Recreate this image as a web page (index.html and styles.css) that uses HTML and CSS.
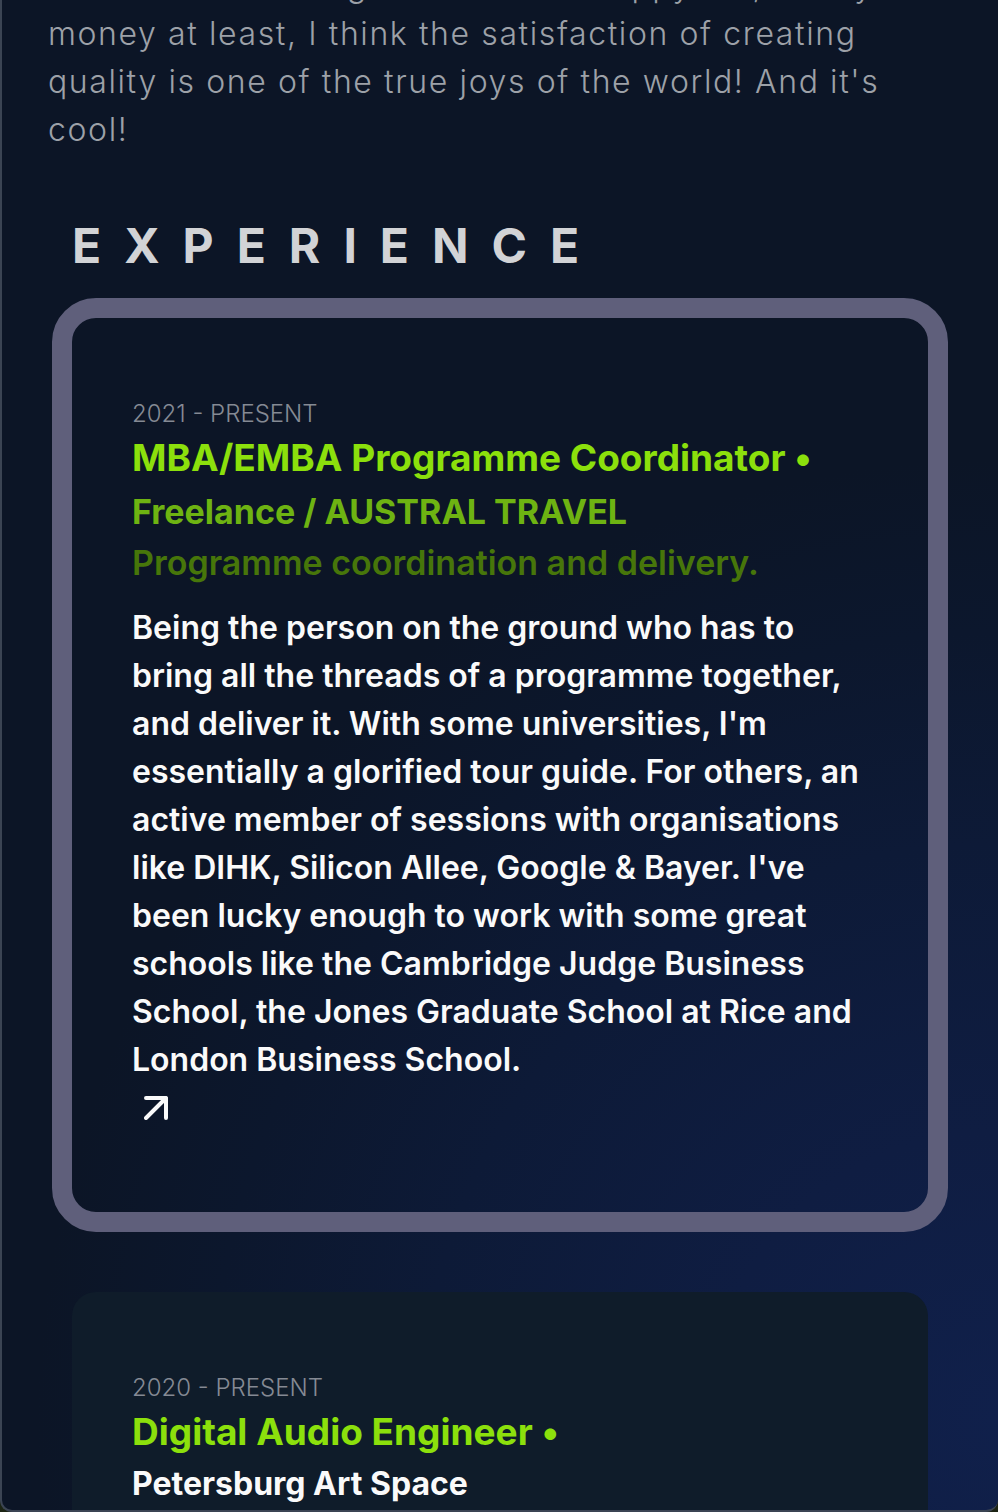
FILE: index.html
```html
<!DOCTYPE html>
<html lang="en">
<head>
<meta charset="utf-8">
<meta name="viewport" content="width=device-width, initial-scale=1">
<title>Experience</title>
<link rel="stylesheet" href="styles.css">
</head>
<body>
<div class="window">
  <main class="content">
    <p class="intro">Even where making it isn't that a happy life, surely money at least, I think the satisfaction of creating quality is one of the true joys of the world! And it's cool!</p>
    <section class="experience">
      <h2 class="section-title">EXPERIENCE</h2>
      <div class="cards">
        <article class="card card-active">
          <p class="period">2021 - PRESENT</p>
          <h3 class="role">MBA/EMBA Programme Coordinator •</h3>
          <p class="company">Freelance / AUSTRAL TRAVEL</p>
          <p class="tagline">Programme coordination and delivery.</p>
          <p class="summary">Being the person on the ground who has to bring all the threads of a programme together, and deliver it. With some universities, I'm essentially a glorified tour guide. For others, an active member of sessions with organisations like DIHK, Silicon Allee, Google &amp; Bayer. I've been lucky enough to work with some great schools like the Cambridge Judge Business School, the Jones Graduate School at Rice and London Business School.</p>
          <a class="more" href="#" aria-label="Open details">
            <svg width="24" height="24" viewBox="0 0 24 24" fill="none" stroke="currentColor" stroke-width="4" stroke-linecap="round" stroke-linejoin="round" aria-hidden="true"><path d="M2 2H22V22M22 2L2 22"/></svg>
          </a>
        </article>
        <article class="card card-filled">
          <p class="period">2020 - PRESENT</p>
          <h3 class="role">Digital Audio Engineer •</h3>
          <p class="place">Petersburg Art Space</p>
        </article>
      </div>
    </section>
  </main>
</div>
</body>
</html>
```
FILE: styles.css
```css
* {
  box-sizing: border-box;
}

body {
  margin: 0;
  background: #1c2414;
  font-family: Inter, "Liberation Sans", sans-serif;
}

h2, h3, p {
  margin: 0;
}

.window {
  height: 100vh;
  overflow: hidden;
  border: 2px solid #3b4453;
  border-width: 0 0 2px 2px;
  border-radius: 0 0 12px 12px;
  background: radial-gradient(circle 960px at 100% 94%, #10204b 0%, #0f1d42 30%, #0d1a37 60%, #0c172d 82%, #0c1526 100%);
}

.content {
  margin-top: -38px;
  padding: 0 70px 0 46px;
}

.intro {
  color: #9da1a8;
  font-size: 32px;
  font-weight: 300;
  line-height: 48px;
  letter-spacing: 0.05em;
}

.experience {
  margin: 56px 0 0 24px;
}

.section-title {
  color: #d2d3d6;
  font-size: 48px;
  font-weight: 700;
  line-height: 72px;
  letter-spacing: 23px;
}

.cards {
  display: flex;
  flex-direction: column;
  gap: 80px;
  margin-top: 36px;
}

.card {
  padding: 80px 60px;
  border-radius: 24px;
}

.card-active {
  outline: 20px solid #5f5f7b;
}

.card-filled {
  background: #0f1c2a;
}

.period {
  color: #858a94;
  font-size: 24px;
  font-weight: 300;
  line-height: 32px;
}

.role {
  color: #8ce00c;
  font-size: 37px;
  font-weight: 700;
  line-height: 56px;
}

.company {
  color: #6eb312;
  font-size: 34px;
  font-weight: 700;
  line-height: 52px;
}

.tagline {
  color: #47760a;
  font-size: 34px;
  font-weight: 600;
  line-height: 50px;
}

.summary,
.place {
  color: #fafafa;
  font-size: 32px;
  font-weight: 600;
  line-height: 48px;
}

.place {
  font-weight: 700;
}

.summary {
  margin-top: 16px;
}

.more {
  display: flex;
  align-items: center;
  height: 48px;
  padding-left: 12px;
  color: #fafafa;
}
```
